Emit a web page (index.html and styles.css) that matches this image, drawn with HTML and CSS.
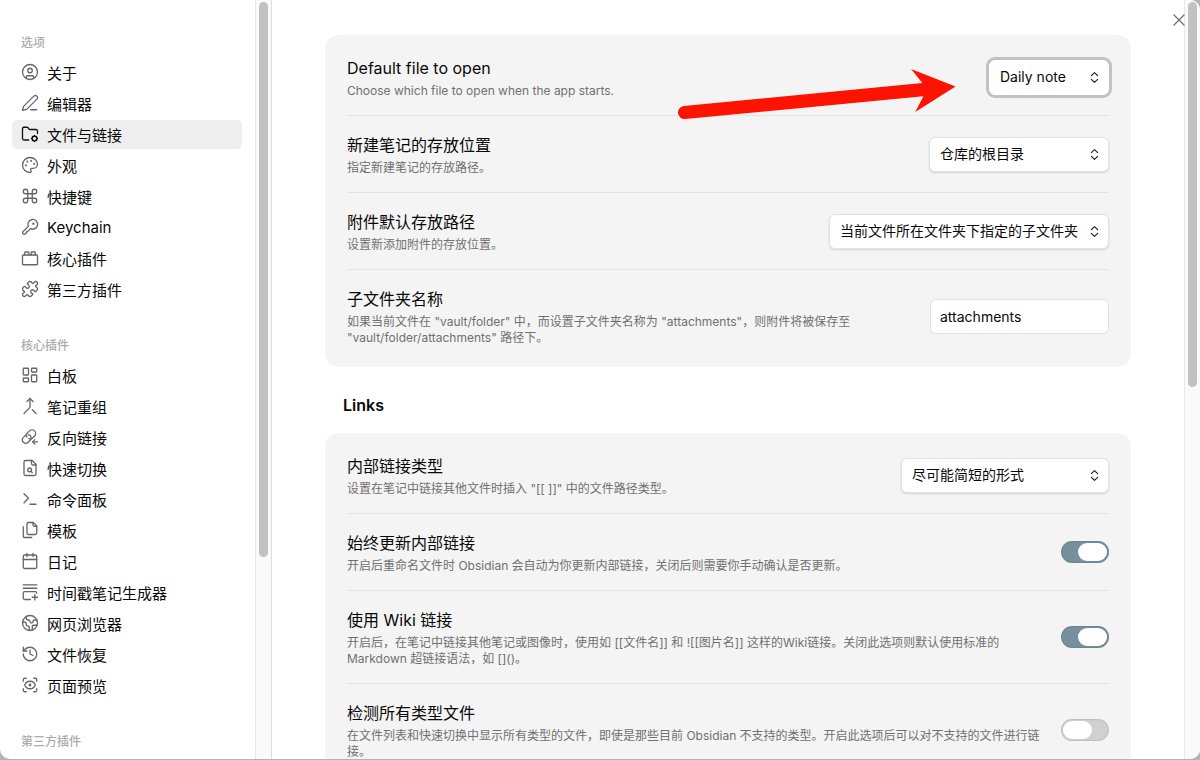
FILE: index.html
```html
<!DOCTYPE html>
<html lang="zh-CN">
<head>
<meta charset="utf-8">
<title>设置</title>
<link rel="stylesheet" href="styles.css">
</head>
<body>
<div class="window">
  <nav class="sidebar">
    <section class="group">
      <h2 class="group-title">选项</h2>
      <ul class="nav-list">
        <li><a class="nav-item" href="#about"><svg class="icon" viewBox="0 0 24 24"><circle cx="12" cy="12" r="10"/><circle cx="12" cy="10" r="3"/><path d="M7 20.662V19a2 2 0 0 1 2-2h6a2 2 0 0 1 2 2v1.662"/></svg>关于</a></li>
        <li><a class="nav-item" href="#editor"><svg class="icon" viewBox="0 0 24 24"><path d="M13 21h8"/><path d="M21.174 6.812a1 1 0 0 0-3.986-3.987L3.842 16.174a2 2 0 0 0-.5.83l-1.321 4.352a.5.5 0 0 0 .623.622l4.353-1.32a2 2 0 0 0 .83-.497z"/></svg>编辑器</a></li>
        <li><a class="nav-item active" href="#files" aria-current="page"><svg class="icon" viewBox="0 0 24 24"><path d="M10.300 20H4a2 2 0 0 1-2-2V5a2 2 0 0 1 2-2h3.900a2 2 0 0 1 1.690.9l.81 1.200a2 2 0 0 0 1.670.9H20a2 2 0 0 1 2 2v3.300"/><circle cx="18" cy="18" r="3.200"/><path d="M18 14v1M18 21v1M22 18h-1M15 18h-1M20.800 15.200l-.7.7M15.900 20.100l-.7.7M20.800 20.800l-.7-.7M15.900 15.900l-.7-.7"/></svg>文件与链接</a></li>
        <li><a class="nav-item" href="#appearance"><svg class="icon" viewBox="0 0 24 24"><circle cx="13.500" cy="6.500" r=".5"/><circle cx="17.500" cy="10.500" r=".5"/><circle cx="6.500" cy="12.500" r=".5"/><circle cx="8.500" cy="7.500" r=".5"/><path d="M12 2C6.500 2 2 6.500 2 12s4.500 10 10 10c.926 0 1.648-.746 1.648-1.688 0-.437-.18-.835-.437-1.125-.29-.289-.438-.652-.438-1.125a1.640 1.640 0 0 1 1.668-1.668h1.996c3.051 0 5.555-2.503 5.555-5.554C21.965 6.012 17.461 2 12 2z"/></svg>外观</a></li>
        <li><a class="nav-item" href="#hotkeys"><svg class="icon" viewBox="0 0 24 24"><path d="M15 6v12a3 3 0 1 0 3-3H6a3 3 0 1 0 3 3V6a3 3 0 1 0-3 3h12a3 3 0 1 0-3-3"/></svg>快捷键</a></li>
        <li><a class="nav-item" href="#keychain"><svg class="icon" viewBox="0 0 24 24"><path d="M9.800 11.200 2.900 17.900a2.200 2.200 0 0 0 0 3.200 2.200 2.200 0 0 0 3.100 0l1.500-1.400.3-1.800 1.700-.4 3.200-3.300a6.500 6.500 0 1 0-2.900-3z"/><circle cx="16.500" cy="7.500" r=".7"/></svg>Keychain</a></li>
        <li><a class="nav-item" href="#core"><svg class="icon" viewBox="0 0 24 24"><rect width="20" height="13" x="2" y="8" rx="1"/><path d="M10.500 8V5c0-.6-.4-1-1-1H6a1 1 0 0 0-1 1v3"/><path d="M19 8V5c0-.6-.4-1-1-1h-3.500a1 1 0 0 0-1 1v3"/></svg>核心插件</a></li>
        <li><a class="nav-item" href="#community"><svg class="icon" viewBox="0 0 24 24"><path d="M19.439 7.850c-.049.322.059.648.289.878l1.568 1.568c.47.47.706 1.087.706 1.704s-.235 1.233-.706 1.704l-1.611 1.611a.98.98 0 0 1-.837.276c-.47-.07-.802-.48-.968-.925a2.501 2.501 0 1 0-3.214 3.214c.446.166.855.497.925.968a.979.979 0 0 1-.276.837l-1.610 1.610a2.404 2.404 0 0 1-1.705.707 2.402 2.402 0 0 1-1.704-.706l-1.568-1.568a1.026 1.026 0 0 0-.877-.29c-.493.074-.84.504-1.020.968a2.500 2.500 0 1 1-3.237-3.237c.464-.18.894-.527.967-1.020a1.026 1.026 0 0 0-.289-.877l-1.568-1.568A2.402 2.402 0 0 1 1.998 12c0-.617.236-1.234.706-1.704L4.230 8.770c.24-.24.581-.353.917-.303.515.077.877.528 1.073 1.010a2.500 2.500 0 1 0 3.259-3.259c-.482-.196-.933-.558-1.010-1.073-.05-.336.062-.676.303-.917l1.525-1.525A2.402 2.402 0 0 1 12 1.998c.617 0 1.234.236 1.704.706l1.568 1.568c.23.23.556.338.877.29.493-.074.84-.504 1.020-.968a2.500 2.500 0 1 1 3.237 3.237c-.464.18-.894.527-.967 1.020Z"/></svg>第三方插件</a></li>
      </ul>
    </section>
    <section class="group">
      <h2 class="group-title">核心插件</h2>
      <ul class="nav-list">
        <li><a class="nav-item" href="#canvas"><svg class="icon" viewBox="0 0 24 24"><rect width="7" height="9" x="3" y="3" rx="1"/><rect width="7" height="5" x="14" y="3" rx="1"/><rect width="7" height="9" x="14" y="12" rx="1"/><rect width="7" height="5" x="3" y="16" rx="1"/></svg>白板</a></li>
        <li><a class="nav-item" href="#composer"><svg class="icon" viewBox="0 0 24 24"><path d="m8 6 4-4 4 4"/><path d="M12 2v10.300a4 4 0 0 1-1.172 2.872L4 22"/><path d="m20 22-5-5"/></svg>笔记重组</a></li>
        <li><a class="nav-item" href="#backlinks"><svg class="icon" viewBox="0 0 24 24"><path d="M10.300 14.300a4.700 4.700 0 0 0 5.100-1l2.700-2.700a4.800 4.800 0 0 0-6.800-6.800L8.600 6.500a4.800 4.800 0 0 0-.9 5.500"/><path d="M12.600 10.300a4.600 4.600 0 0 0-2.600-1.500M6.200 9.600l-3 2.900a4.500 4.500 0 0 0 6.400 6.400l2.500-2.500a4.600 4.600 0 0 0 .9-5"/><path d="M22 18.500h-6.500"/><path d="m18.500 15.500-3 3 3 3"/></svg>反向链接</a></li>
        <li><a class="nav-item" href="#switcher"><svg class="icon" viewBox="0 0 24 24"><path d="M15 2H6a2 2 0 0 0-2 2v16a2 2 0 0 0 2 2h12a2 2 0 0 0 2-2V7Z"/><path d="M14 2v4a2 2 0 0 0 2 2h4"/><circle cx="11.500" cy="14.500" r="2.500"/><path d="M13.300 16.300 15 18"/></svg>快速切换</a></li>
        <li><a class="nav-item" href="#palette"><svg class="icon" viewBox="0 0 24 24"><path d="m4 17 6-6-6-6"/><path d="M12 19h8"/></svg>命令面板</a></li>
        <li><a class="nav-item" href="#templates"><svg class="icon" viewBox="0 0 24 24"><path d="M21 7h-3a2 2 0 0 1-2-2V2"/><path d="M10 18a2 2 0 0 1-2-2V4a2 2 0 0 1 2-2h6.500L21 6.500V16a2 2 0 0 1-2 2Z"/><path d="M3 7.600v12.800A1.600 1.600 0 0 0 4.600 22h9.800"/></svg>模板</a></li>
        <li><a class="nav-item" href="#daily"><svg class="icon" viewBox="0 0 24 24"><path d="M8 2v4M16 2v4M3 10h18"/><rect width="18" height="18" x="3" y="4" rx="2"/></svg>日记</a></li>
        <li><a class="nav-item" href="#zettel"><svg class="icon" viewBox="0 0 24 24"><path d="M3 2.500h18M3 7h18"/><path d="M21 13.500a2 2 0 0 0-2-2H5a2 2 0 0 0-2 2V20a2 2 0 0 0 2 2h7.500"/><path d="M18.500 15.500v7M15 19h7"/></svg>时间戳笔记生成器</a></li>
        <li><a class="nav-item" href="#web"><svg class="icon" viewBox="0 0 24 24"><path d="M21.540 15H17a2 2 0 0 0-2 2v4.540"/><path d="M7 3.340V5a3 3 0 0 0 3 3 2 2 0 0 1 2 2c0 1.100.9 2 2 2a2 2 0 0 0 2-2c0-1.100.9-2 2-2h3.170"/><path d="M11 21.950V18a2 2 0 0 0-2-2 2 2 0 0 1-2-2v-1a2 2 0 0 0-2-2H2.050"/><circle cx="12" cy="12" r="10"/></svg>网页浏览器</a></li>
        <li><a class="nav-item" href="#recovery"><svg class="icon" viewBox="0 0 24 24"><path d="M3 12a9 9 0 1 0 9-9 9.750 9.750 0 0 0-6.740 2.740L3 8"/><path d="M3 3v5h5"/><path d="M12 7v5l4 2"/></svg>文件恢复</a></li>
        <li><a class="nav-item" href="#preview"><svg class="icon" viewBox="0 0 24 24"><path d="M3 7V5a2 2 0 0 1 2-2h2M17 3h2a2 2 0 0 1 2 2v2M21 17v2a2 2 0 0 1-2 2h-2M7 21H5a2 2 0 0 1-2-2v-2"/><circle cx="12" cy="12" r="1"/><path d="M18.944 12.330a1 1 0 0 0 0-.66 7.500 7.500 0 0 0-13.888 0 1 1 0 0 0 0 .66 7.500 7.500 0 0 0 13.888 0"/></svg>页面预览</a></li>
      </ul>
    </section>
    <section class="group">
      <h2 class="group-title">第三方插件</h2>
    </section>
  </nav>
  <div class="scrollbar side-scroll"><div class="thumb"></div></div>

  <main class="content">
    <section class="card">
      <div class="row">
        <div class="info">
          <label class="name" for="default-file">Default file to open</label>
          <p class="desc">Choose which file to open when the app starts.</p>
        </div>
        <div class="select-wrap w-small focused">
          <select class="select" id="default-file"><option>Daily note</option></select>
          <svg class="chevrons" viewBox="0 0 10 14"><path d="m1.500 5 3.500-3.500L8.500 5M1.500 9 5 12.500 8.500 9"/></svg>
        </div>
      </div>
      <div class="row">
        <div class="info">
          <label class="name" for="new-note">新建笔记的存放位置</label>
          <p class="desc">指定新建笔记的存放路径。</p>
        </div>
        <div class="select-wrap w-medium">
          <select class="select" id="new-note"><option>仓库的根目录</option></select>
          <svg class="chevrons" viewBox="0 0 10 14"><path d="m1.500 5 3.500-3.500L8.500 5M1.500 9 5 12.500 8.500 9"/></svg>
        </div>
      </div>
      <div class="row">
        <div class="info">
          <label class="name" for="attach-path">附件默认存放路径</label>
          <p class="desc">设置新添加附件的存放位置。</p>
        </div>
        <div class="select-wrap w-wide">
          <select class="select" id="attach-path"><option>当前文件所在文件夹下指定的子文件夹</option></select>
          <svg class="chevrons" viewBox="0 0 10 14"><path d="m1.500 5 3.500-3.500L8.500 5M1.500 9 5 12.500 8.500 9"/></svg>
        </div>
      </div>
      <div class="row">
        <div class="info">
          <label class="name" for="subfolder">子文件夹名称</label>
          <p class="desc">如果当前文件在 "vault/folder" 中，而设置子文件夹名称为 "attachments"，则附件将被保存至 "vault/folder/attachments" 路径下。</p>
        </div>
        <input class="text-input" id="subfolder" type="text" value="attachments">
      </div>
    </section>

    <h2 class="section-title">Links</h2>

    <section class="card">
      <div class="row">
        <div class="info">
          <label class="name" for="link-type">内部链接类型</label>
          <p class="desc">设置在笔记中链接其他文件时插入 "[[ ]]" 中的文件路径类型。</p>
        </div>
        <div class="select-wrap w-large">
          <select class="select" id="link-type"><option>尽可能简短的形式</option></select>
          <svg class="chevrons" viewBox="0 0 10 14"><path d="m1.500 5 3.500-3.500L8.500 5M1.500 9 5 12.500 8.500 9"/></svg>
        </div>
      </div>
      <div class="row">
        <div class="info">
          <label class="name" for="update-links">始终更新内部链接</label>
          <p class="desc">开启后重命名文件时 Obsidian 会自动为你更新内部链接，关闭后则需要你手动确认是否更新。</p>
        </div>
        <input class="toggle" id="update-links" type="checkbox" checked>
      </div>
      <div class="row">
        <div class="info">
          <label class="name" for="wiki-links">使用 Wiki 链接</label>
          <p class="desc">开启后，在笔记中链接其他笔记或图像时，使用如 [[文件名]] 和 ![[图片名]] 这样的Wiki链接。关闭此选项则默认使用标准的 Markdown 超链接语法，如 []()。</p>
        </div>
        <input class="toggle" id="wiki-links" type="checkbox" checked>
      </div>
      <div class="row">
        <div class="info">
          <label class="name" for="all-types">检测所有类型文件</label>
          <p class="desc">在文件列表和快速切换中显示所有类型的文件，即使是那些目前 Obsidian 不支持的类型。开启此选项后可以对不支持的文件进行链接。</p>
        </div>
        <input class="toggle" id="all-types" type="checkbox">
      </div>
    </section>
  </main>
  <div class="scrollbar main-scroll"><div class="thumb"></div></div>

  <button class="close" type="button" aria-label="关闭"><svg viewBox="0 0 12 12"><path d="M1 1l10 10M11 1 1 11"/></svg></button>
  <svg class="arrow" viewBox="0 0 282 56" aria-hidden="true"><path d="M8 40 246.400 17 235 3 279.500 20.500 239.200 46 247.400 30.300 9 53A6.500 6.500 0 0 1 8 40z"/></svg>
</div>
</body>
</html>
```
FILE: styles.css
```css
* {
  box-sizing: border-box;
}

body {
  margin: 0;
  background: #b4b4b4;
  color: #080808;
  font-family: Inter, "Noto Sans CJK SC", sans-serif;
}

h2,
p,
ul {
  margin: 0;
  padding: 0;
}

.window {
  position: relative;
  display: flex;
  height: calc(100vh - 1px);
  overflow: hidden;
  border-radius: 0 10px 10px 10px;
  background: #fff;
}

.sidebar {
  flex: 0 0 255px;
  padding: 33px 13px 0 12px;
  overflow: hidden;
}

.group {
  margin-bottom: 32px;
}

.group-title {
  margin: 0 9px 5px;
  color: #ababab;
  font-size: 12px;
  font-weight: 500;
  line-height: 20px;
}

.nav-list {
  display: flex;
  flex-direction: column;
  gap: 2px;
  list-style: none;
}

.nav-item {
  display: flex;
  align-items: center;
  gap: 8px;
  height: 29px;
  padding: 0 9px 1px;
  border-radius: 5px;
  color: #080808;
  font-size: 15px;
  text-decoration: none;
}

.nav-item.active {
  background: #eee;
}

.icon {
  width: 18px;
  height: 18px;
  fill: none;
  stroke: #666;
  stroke-width: 1.75;
  stroke-linecap: round;
  stroke-linejoin: round;
}

.active .icon {
  stroke: #111;
}

.scrollbar {
  flex: none;
  padding: 2px 3px;
  border-left: 1px solid #e8e8e8;
  background: #fafafa;
}

.thumb {
  height: 100%;
  border-radius: 5px;
  background: #c2c2c2;
}

.side-scroll {
  width: 17px;
  border-right: 1px solid #ddd;
}

.side-scroll .thumb {
  max-height: 555px;
}

.main-scroll {
  width: 16px;
}

.main-scroll .thumb {
  max-height: 385px;
}

.content {
  flex: 1;
  min-width: 0;
  padding: 35px 53px 0;
  overflow: hidden;
}

.card {
  padding: 4px 22px 5px;
  border-radius: 14px;
  background: #f4f4f4;
}

.row {
  display: flex;
  align-items: center;
  justify-content: space-between;
  gap: 16px;
  padding: 16px 0;
  border-bottom: 1px solid #e4e4e4;
}

.row:last-child {
  border-bottom: 0;
}

.info {
  flex: 1;
  min-width: 0;
  padding-top: 2px;
}

.name {
  display: block;
  margin-bottom: 3px;
  font-size: 16px;
  line-height: 23px;
}

.desc {
  color: #707070;
  font-size: 12px;
  line-height: 16px;
}

.section-title {
  padding: 26px 18px 16px;
  font-size: 16px;
  font-weight: 600;
  line-height: 24px;
}

.select-wrap {
  position: relative;
  flex: none;
}

.w-small {
  width: 120px;
}

.w-medium {
  width: 180px;
}

.w-large {
  width: 208px;
}

.w-wide {
  width: 280px;
}

.select,
.text-input {
  height: 35px;
  padding: 0 10px;
  border: 1px solid #e2e2e2;
  border-radius: 6px;
  background: #fff;
  color: #080808;
  font-family: inherit;
  font-size: 14px;
}

.select {
  display: block;
  width: 100%;
  padding-bottom: 1px;
  appearance: none;
  box-shadow: 0 1px 2px rgba(0, 0, 0, 0.14);
}

.focused .select {
  border-color: #fff;
  box-shadow: 0 0 0 3px #c2c2c2;
}

.text-input {
  flex: none;
  width: 179px;
  padding: 0 9px;
}

.chevrons {
  position: absolute;
  top: 11px;
  right: 10px;
  width: 9px;
  height: 13px;
  fill: none;
  stroke: #222;
  stroke-width: 1.3;
  stroke-linecap: round;
  stroke-linejoin: round;
  pointer-events: none;
}

.toggle {
  display: flex;
  flex: none;
  width: 48px;
  height: 22px;
  margin: 0;
  padding: 2px;
  border-radius: 11px;
  background: #d0d0d0;
  box-shadow: inset 0 0 1px 1px rgba(0, 0, 0, 0.08);
  appearance: none;
}

.toggle::before {
  width: 29px;
  height: 18px;
  border-radius: 9px;
  background: #fff;
  content: "";
}

.toggle:checked {
  justify-content: flex-end;
  background: #76909d;
}

.close {
  position: absolute;
  top: 10px;
  right: 11px;
  width: 20px;
  height: 20px;
  padding: 4px;
  border: 0;
  background: none;
}

.close svg {
  display: block;
  width: 12px;
  height: 12px;
  stroke: #707070;
  stroke-width: 1.3;
  stroke-linecap: round;
}

.arrow {
  position: absolute;
  top: 66px;
  left: 676px;
  width: 282px;
  height: 56px;
  fill: #fe1200;
}
```
